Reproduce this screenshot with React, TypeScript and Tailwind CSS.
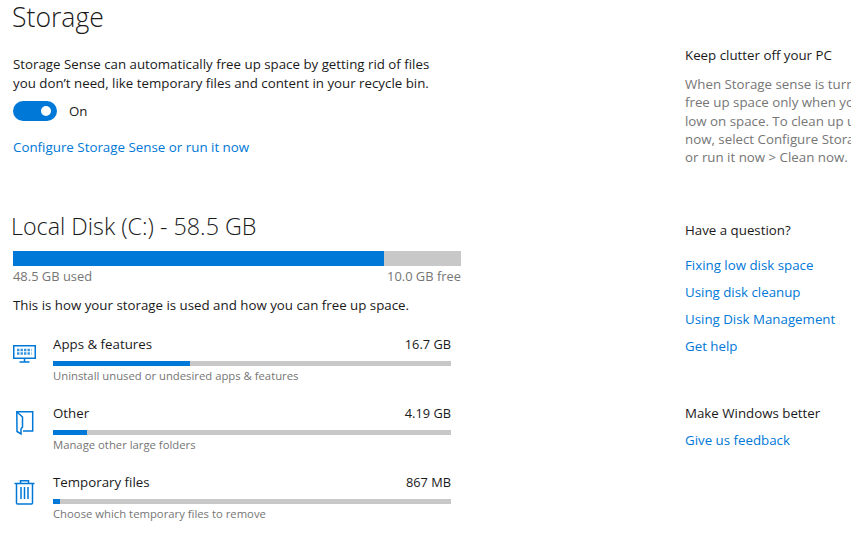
const font = { fontFamily: '"Open Sans", "Noto Sans", sans-serif' };

type StorageRow = {
  label: string;
  size: string;
  hint: string;
  usedWidth: number;
  icon: React.ReactNode;
};

const rows: StorageRow[] = [
  {
    label: 'Apps & features',
    size: '16.7 GB',
    hint: 'Uninstall unused or undesired apps & features',
    usedWidth: 137,
    icon: (
      <svg className="mt-[3px]" width="24" height="20" viewBox="0 0 24 20" fill="none" stroke="#0078d7" strokeWidth="1.5">
        <rect x="0.75" y="0.75" width="21.5" height="12.5" />
        <path d="M11.5 13.5v3M6.5 17h10" />
        <path d="M4 5h14.5M4 8.5h14.5" strokeDasharray="2.4 1.1" strokeWidth="2.4" opacity="0.8" />
      </svg>
    ),
  },
  {
    label: 'Other',
    size: '4.19 GB',
    hint: 'Manage other large folders',
    usedWidth: 34,
    icon: (
      <svg className="ml-[3px]" width="20" height="26" viewBox="0 0 20 26" fill="none" stroke="#0078d7" strokeWidth="1.5">
        <path d="M0.8 0.8H16.7V20H7" />
        <path d="M0.8 0.8L6.5 6V16L5 18V23L1 20.5Z" />
      </svg>
    ),
  },
  {
    label: 'Temporary files',
    size: '867 MB',
    hint: 'Choose which temporary files to remove',
    usedWidth: 7,
    icon: (
      <svg className="ml-px" width="22" height="25" viewBox="0 0 22 25" fill="none" stroke="#0078d7" strokeWidth="1.5">
        <path d="M0.5 3.5h20M6.5 3.5V0.8h8v2.7" />
        <path d="M2.5 3.5v19.5a1 1 0 0 0 1 1h14a1 1 0 0 0 1-1V3.5" />
        <path d="M7 7v12M10.5 7v12M14 7v12" />
      </svg>
    ),
  },
];

const helpLinks = ['Fixing low disk space', 'Using disk cleanup', 'Using Disk Management', 'Get help'];

function UsageRow({ row }: { row: StorageRow }) {
  return (
    <div className="flex h-[69px]">
      <div className="w-[40px] pt-[9px] shrink-0">{row.icon}</div>
      <div className="w-[398px]">
        <div className="flex justify-between h-[24px] items-center text-[13.3px] text-[#1a1a1a]">
          <span>{row.label}</span>
          <span className="text-[12.8px]">{row.size}</span>
        </div>
        <div className="h-[5px] mt-[4px] bg-[#c8c8c8]">
          <div className="h-full bg-[#0078d7]" style={{ width: row.usedWidth }} />
        </div>
        <div className="mt-[2px] text-[11.3px] leading-[16px] text-[#767676]">{row.hint}</div>
      </div>
    </div>
  );
}

export default function App() {
  return (
    <div className="flex w-[851px] h-[536px] overflow-hidden bg-white" style={font}>
      <div className="w-[672px] shrink-0 pl-[13px]">
        <h1 className="text-[26.6px] leading-[34px] font-light text-[#1a1a1a] -ml-px">Storage</h1>
        <p className="mt-[21px] text-[13.3px] leading-[19px] text-[#1a1a1a]">
          Storage Sense can automatically free up space by getting rid of files
          <br />
          you don’t need, like temporary files and content in your recycle bin.
        </p>
        <div className="flex items-center mt-[8px] h-[20px]">
          <div className="flex items-center justify-end w-[44px] h-[20px] pr-[6px] rounded-full bg-[#0078d7]">
            <div className="w-[10px] h-[10px] rounded-full bg-white" />
          </div>
          <span className="ml-[12px] pt-[2px] text-[13.3px] text-[#1a1a1a]">On</span>
        </div>
        <a className="block mt-[16px] text-[13.35px] leading-[20px] text-[#0078d7]">Configure Storage Sense or run it now</a>

        <h2 className="mt-[54px] -ml-[2px] text-[23.3px] leading-[30px] font-light text-[#1a1a1a]">Local Disk (C:) - 58.5 GB</h2>
        <div className="w-[448px] h-[15px] mt-[10px] bg-[#c8c8c8]">
          <div className="w-[371px] h-full bg-[#0078d7]" />
        </div>
        <div className="flex justify-between w-[448px] mt-[1px] text-[12.9px] leading-[19px] text-[#767676]">
          <span>48.5 GB used</span>
          <span>10.0 GB free</span>
        </div>
        <p className="mt-[9px] text-[13.3px] leading-[20px] text-[#1a1a1a]">
          This is how your storage is used and how you can free up space.
        </p>
        <div className="mt-[18px]">
          {rows.map((row) => (
            <UsageRow key={row.label} row={row} />
          ))}
        </div>
      </div>

      <div className="pl-[13px] w-[179px] shrink-0 overflow-hidden whitespace-nowrap text-[13.3px]">
        <h3 className="mt-[45px] leading-[20px] text-[#1a1a1a]">Keep clutter off your PC</h3>
        <p className="mt-[10px] leading-[18.25px] text-[#767676]">
          When Storage sense is turned on, it will
          <br />
          free up space only when you're running
          <br />
          low on space. To clean up unused files
          <br />
          now, select Configure Storage Sense
          <br />
          or run it now &gt; Clean now.
        </p>
        <h3 className="mt-[54px] leading-[20px] text-[#1a1a1a]">Have a question?</h3>
        <div className="mt-[15px] flex flex-col gap-[7px]">
          {helpLinks.map((link) => (
            <a key={link} className="leading-[20px] text-[#0078d7]">
              {link}
            </a>
          ))}
        </div>
        <h3 className="mt-[47px] leading-[20px] text-[#1a1a1a]">Make Windows better</h3>
        <a className="block mt-[7px] leading-[20px] text-[#0078d7]">Give us feedback</a>
      </div>
    </div>
  );
}
